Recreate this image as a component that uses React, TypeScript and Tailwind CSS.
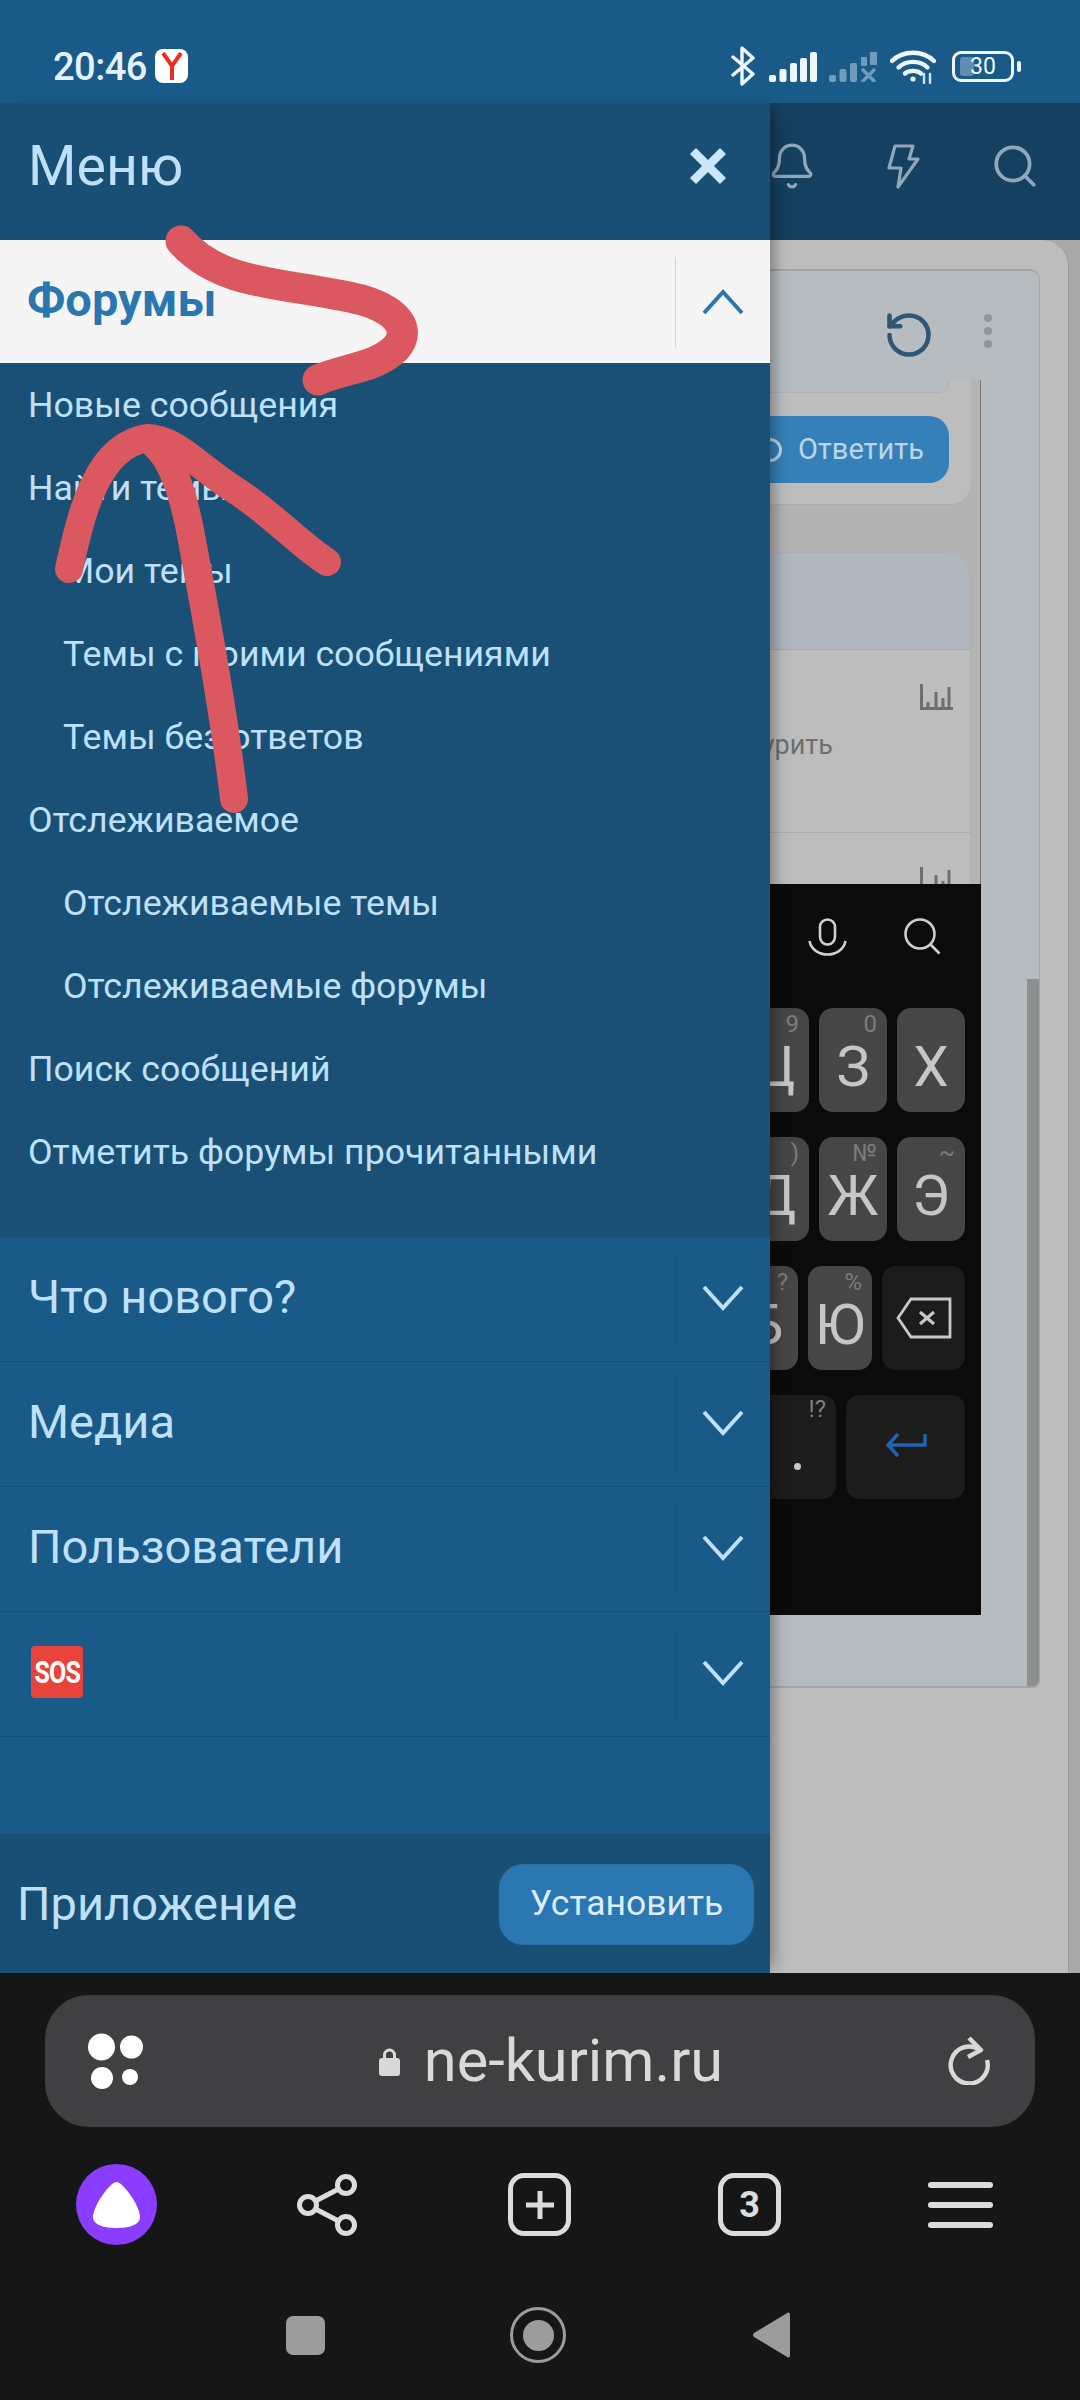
import { Bell, Search, RotateCcw } from "lucide-react";

const subItems = [
  { label: "Новые сообщения", nested: false },
  { label: "Найти темы", nested: false },
  { label: "Мои темы", nested: true },
  { label: "Темы с моими сообщениями", nested: true },
  { label: "Темы без ответов", nested: true },
  { label: "Отслеживаемое", nested: false },
  { label: "Отслеживаемые темы", nested: true },
  { label: "Отслеживаемые форумы", nested: true },
  { label: "Поиск сообщений", nested: false },
  { label: "Отметить форумы прочитанными", nested: false },
];

function Chevron({ up = false, color }: { up?: boolean; color: string }) {
  return (
    <svg width="42" height="26" viewBox="0 0 42 26" fill="none">
      <polyline
        points={up ? "2,24 21,3 40,24" : "2,2 21,23 40,2"}
        stroke={color}
        strokeWidth="4"
      />
    </svg>
  );
}

function StatusBar() {
  return (
    <div className="h-[103px] shrink-0 bg-[#195a88] flex items-start text-[#e4f2fc]">
      <span className="ml-[53px] mt-[47px] text-[38px] leading-[40px] font-medium tracking-[-0.5px] w-[95px]">20:46</span>
      <div className="ml-[7px] mt-[49px] w-[33px] h-[34px] rounded-[8px] bg-white flex items-center justify-center">
        <svg width="22" height="28" viewBox="0 0 22 28" fill="none" stroke="#ee2c22" strokeWidth="4">
          <path d="M2 1 L11 14 L20 1 M11 14 V28" />
        </svg>
      </div>
      <div className="ml-[543px] mt-[46px] flex items-start">
        <svg width="24" height="40" viewBox="0 0 24 40" fill="none" stroke="#eef7fd" strokeWidth="3.4" strokeLinecap="round" strokeLinejoin="round">
          <path d="M2 11 L22 28 L11 38 V2 L22 12 L2 29" />
        </svg>
        <svg className="ml-[14px] mt-[6px]" width="48" height="30" viewBox="0 0 48 30" fill="#eef7fd">
          <rect x="0" y="23" width="7" height="7" rx="2" />
          <rect x="10.5" y="17" width="7" height="13" rx="2" />
          <rect x="21" y="11" width="7" height="19" rx="2" />
          <rect x="31" y="6" width="7" height="24" rx="2" />
          <rect x="41" y="0" width="7" height="30" rx="2" />
        </svg>
        <svg className="ml-[12px] mt-[6px]" width="48" height="30" viewBox="0 0 48 30" fill="#6f9bbd">
          <rect x="0" y="23" width="7" height="7" rx="2" />
          <rect x="10.5" y="17" width="7" height="13" rx="2" />
          <rect x="21" y="11" width="7" height="19" rx="2" />
          <rect x="32" y="5" width="6" height="9" rx="1" />
          <rect x="41" y="0" width="7" height="13" rx="1" />
          <path d="M33 17 L46 30 M46 17 L33 30" stroke="#6f9bbd" strokeWidth="3.5" fill="none" />
        </svg>
        <svg className="ml-[13px] mt-[4px]" width="46" height="34" viewBox="0 0 46 34" fill="none" stroke="#eef7fd" strokeWidth="4.4" strokeLinecap="round">
          <path d="M2 11 C13 0 33 0 44 11" />
          <path d="M8.5 17.5 C16 10 30 10 37.5 17.5" />
          <path d="M15 23.5 C19 20 27 20 31 23.5" />
          <circle cx="23" cy="29" r="2.6" fill="#eef7fd" stroke="none" />
          <path d="M34 24 V33 M40 24 V33" strokeWidth="2.4" stroke="#cfe4f4" />
        </svg>
        <div className="ml-[16px] mt-[5px] relative w-[62px] h-[31px] rounded-[9px] border-[3px] border-[#eef7fd] flex items-center pl-[5px]">
          <div className="w-[14px] h-[19px] rounded-[3px] bg-[#5f8db3]" />
          <span className="absolute left-[15px] top-0 text-[23px] leading-[25px] text-[#eef7fd]">30</span>
        </div>
        <div className="ml-[3px] mt-[15px] w-[4px] h-[11px] rounded-[2px] bg-[#eef7fd]" />
      </div>
    </div>
  );
}

function AppHeader() {
  return (
    <div className="h-[137px] shrink-0 bg-[#15405f] flex items-center pl-[767px] pb-[11px] text-[#8fa8bc]">
      <Bell className="w-[50px] h-[50px]" strokeWidth={1.6} />
      <svg className="ml-[69px]" width="34" height="45" viewBox="0 0 34 45" fill="none" stroke="currentColor" strokeWidth="3.2" strokeLinejoin="round">
        <path d="M9 2 H27 L23 15 H32 L12 43 L15 24 H3 Z" />
      </svg>
      <Search className="ml-[70px] w-[50px] h-[50px]" strokeWidth={1.8} />
    </div>
  );
}

function BarsIcon() {
  return (
    <svg className="absolute right-[16px] top-[34px]" width="34" height="26" viewBox="0 0 34 26" fill="none" stroke="#6e6e6e">
      <path d="M1.5 0 V24.5 H33" strokeWidth="3" />
      <path d="M8 24 V18 M16 24 V8 M23 24 V14 M29 24 V3" strokeWidth="3" />
    </svg>
  );
}

function PageBehind() {
  return (
    <div className="flex-1 bg-[#a9a9a9] pr-[11px] overflow-hidden">
      <div className="h-full bg-[#bdbdbd] rounded-tr-[26px] border-r border-[#9c9c9c] pt-[29px] pr-[28px]">
        <div className="h-[1419px] bg-[#b7bcc0] rounded-tr-[10px] rounded-br-[8px] border-t-2 border-r border-b-2 border-[#a2a4a6] flex flex-col relative">
          <div className="h-[109px] shrink-0 flex items-start justify-end pr-[47px] pt-[38px]">
            <RotateCcw className="w-[52px] h-[52px] text-[#2f5673]" strokeWidth={2.1} />
            <div className="ml-[49px] mt-[5px] flex flex-col gap-[5px]">
              <div className="w-[8px] h-[8px] rounded-full bg-[#8a96a0]" />
              <div className="w-[8px] h-[8px] rounded-full bg-[#8a96a0]" />
              <div className="w-[8px] h-[8px] rounded-full bg-[#8a96a0]" />
            </div>
          </div>
          <div className="w-[981px] h-[505px] bg-[#b3b3b3] border-r border-[#777777] pr-[9px] flex flex-col">
            <div className="h-[125px] shrink-0 bg-[#bdbdbd] rounded-br-[20px] border-b border-[#adadad] pr-[22px] flex flex-col items-end">
              <div className="w-full h-[13px] rounded-br-[10px] border-b border-r border-[#a9b4ba] bg-[#b7bcc0]" />
              <div className="mt-[23px] w-[260px] h-[67px] rounded-r-[20px] bg-[#3580b8] flex items-center justify-end pr-[25px] text-[#b9d6ea] text-[29px]">
                <div className="w-[24px] h-[24px] rounded-full border-[3px] border-[#b9d6ea] mr-[16px]" />
                Ответить
              </div>
            </div>
            <div className="mt-[47px] flex-1 rounded-tr-[26px] bg-[#bdbdbd] border-r border-t border-[#adb0b2] flex flex-col">
              <div className="h-[97px] shrink-0 rounded-tr-[26px] bg-[#b0b6be] border-b border-[#a6aaaa]" />
              <div className="h-[183px] shrink-0 border-b border-[#adadad] relative">
                <BarsIcon />
                <div className="absolute right-[137px] top-[80px] text-[27px] leading-[30px] text-[#6f6f6f]">Бросить курить</div>
              </div>
              <div className="h-[40px] relative">
                <BarsIcon />
              </div>
            </div>
          </div>
          <div className="absolute right-0 bottom-0 w-[12px] h-[707px] bg-[#8e9090] rounded-br-[6px]" />
        </div>
      </div>
    </div>
  );
}

function Key({ letter, hint, w = "w-[68px]" }: { letter: string; hint?: string; w?: string }) {
  return (
    <div className={`${w} h-[104px] shrink-0 rounded-[14px] bg-[#464646] relative flex items-center justify-center pt-[14px] text-[56px] leading-none text-[#c6c6c6]`}>
      {hint && <span className="absolute right-[10px] top-[2px] text-[24px] leading-[28px] text-[#7c7c7c]">{hint}</span>}
      {letter}
    </div>
  );
}

function Keyboard() {
  return (
    <div className="absolute left-[700px] top-[884px] w-[281px] h-[731px] bg-[#0b0b0b] overflow-hidden flex flex-col items-end pr-[16px]">
      <div className="h-[124px] w-full flex justify-end items-start pt-[34px] pr-[24px] gap-[57px]">
        <svg width="39" height="39" viewBox="0 0 39 39" fill="none" stroke="#cfcfcf" strokeWidth="2.6">
          <rect x="12" y="1.5" width="15" height="25" rx="7.5" />
          <path d="M1.5 23 C5 41 34 41 37.5 23" />
        </svg>
        <svg width="37" height="37" viewBox="0 0 37 37" fill="none" stroke="#cfcfcf" strokeWidth="2.6">
          <circle cx="16" cy="16" r="14.5" />
          <path d="M26 26 L35.5 35.5" />
        </svg>
      </div>
      <div className="flex gap-[10px]">
        <Key letter="Ц" hint="9" />
        <Key letter="З" hint="0" />
        <Key letter="Х" />
      </div>
      <div className="flex gap-[10px] mt-[25px]">
        <Key letter="Д" hint=")" />
        <Key letter="Ж" hint="№" />
        <Key letter="Э" hint="~" />
      </div>
      <div className="flex gap-[10px] mt-[25px]">
        <Key letter="Б" hint="?" w="w-[64px]" />
        <Key letter="Ю" hint="%" w="w-[64px]" />
        <div className="w-[83px] h-[104px] rounded-[14px] bg-[#1c1c1c] flex items-center justify-center">
          <svg width="56" height="42" viewBox="0 0 56 42" fill="none" stroke="#c8c8c8" strokeWidth="2.8">
            <path d="M15 2 H54 V40 H15 L2 21 Z" />
            <path d="M24 15 L38 27 M38 15 L24 27" strokeWidth="3.2" />
          </svg>
        </div>
      </div>
      <div className="flex gap-[10px] mt-[25px]">
        <div className="w-[136px] h-[104px] rounded-[14px] bg-[#1c1c1c] relative">
          <span className="absolute right-[10px] top-[0px] text-[24px] leading-[28px] text-[#808080]">!?</span>
          <div className="absolute left-[94px] top-[68px] w-[7px] h-[7px] rounded-full bg-[#c6c6c6]" />
        </div>
        <div className="w-[119px] h-[104px] rounded-[14px] bg-[#1c1c1c] flex items-center justify-center pb-[4px]">
          <svg width="42" height="26" viewBox="0 0 42 26" fill="none" stroke="#1f63b4" strokeWidth="3.4">
            <path d="M40 2 V13 H3 M13 2 L3 13 L13 24" />
          </svg>
        </div>
      </div>
    </div>
  );
}

function DrawerRow({ label, children }: { label?: string; children?: React.ReactNode }) {
  return (
    <div className="h-[125px] shrink-0 flex items-center border-b border-[#174f79]">
      <div className="flex-1 pl-[28px] text-[47px] leading-[52px] text-[#bfe0f9] pb-[4px]">
        {label}
        {children}
      </div>
      <div className="w-[95px] h-[90px] border-l border-[#174f79] flex items-center justify-center pb-[2px]">
        <Chevron color="#bfe0f9" />
      </div>
    </div>
  );
}

function Drawer() {
  return (
    <div className="absolute left-0 top-[103px] w-[770px] h-[1870px] flex flex-col bg-[#195a88] shadow-[10px_0_14px_-6px_rgba(0,0,0,0.35)]">
      <div className="h-[137px] shrink-0 bg-[#1a4f75] flex items-center justify-between pl-[28px] pr-[43px] pb-[9px]">
        <span className="text-[55.5px] leading-[60px] text-[#bfe0f9]">Меню</span>
        <svg width="38" height="36" viewBox="0 0 38 36" fill="none" stroke="#c9e6fc" strokeWidth="8.5" className="mb-[2px]">
          <path d="M4 3 L34 33 M34 3 L4 33" />
        </svg>
      </div>
      <div className="h-[123px] shrink-0 bg-[#f5f5f5] flex items-center">
        <div className="flex-1 pl-[27px] pb-[3px] text-[47px] leading-[50px] font-bold text-[#2a77b0]">Форумы</div>
        <div className="w-[95px] h-[90px] border-l border-[#c3d7e5] flex items-center justify-center">
          <Chevron up color="#2a77b0" />
        </div>
      </div>
      <div className="h-[874px] shrink-0 bg-[#1a5075] pt-[1px]">
        {subItems.map((item) => (
          <div
            key={item.label}
            className={`h-[83px] flex items-center text-[35.7px] text-[#bfe0f9] ${item.nested ? "pl-[63px]" : "pl-[28px]"}`}
          >
            {item.label}
          </div>
        ))}
      </div>
      <DrawerRow label="Что нового?" />
      <DrawerRow label="Медиа" />
      <DrawerRow label="Пользователи" />
      <DrawerRow>
        <div className="w-[52px] h-[52px] ml-[3px] rounded-[4px] bg-[#e8443b] flex items-center justify-center">
          <span className="text-[32px] leading-none font-bold tracking-[-1px] text-white scale-x-[0.78]">SOS</span>
        </div>
      </DrawerRow>
      <div className="flex-1 border-b border-[#174f79]" />
      <div className="h-[138px] shrink-0 bg-[#1a4f75] flex items-center justify-between pl-[17px] pr-[16px]">
        <span className="text-[47px] leading-[52px] text-[#bfe0f9]">Приложение</span>
        <div className="w-[255px] h-[81px] rounded-[24px] bg-[#2a77b2] border border-[#2f6fa3] flex items-center justify-center text-[35.5px] text-[#dcecf8]">
          Установить
        </div>
      </div>
    </div>
  );
}

function BrowserBar() {
  return (
    <div className="h-[427px] shrink-0 bg-[#161616] pt-[22px] relative z-10">
      <div className="mx-[45px] h-[132px] rounded-[44px] bg-[#404043] flex items-center pl-[43px] pr-[45px]">
        <svg width="56" height="56" viewBox="0 0 56 56" fill="#ffffff">
          <circle cx="13.5" cy="14" r="13.5" />
          <circle cx="43.5" cy="14" r="11.5" />
          <circle cx="14" cy="45" r="11" />
          <circle cx="42" cy="44" r="8" />
        </svg>
        <div className="flex-1 flex items-center justify-center pl-[10px]">
          <svg width="21" height="29" viewBox="0 0 21 29" fill="#d9d9d9">
            <path d="M4 12 V8 a6.5 6.5 0 0 1 13 0 V12 h-3 V8 a3.5 3.5 0 0 0 -7 0 V12z" />
            <rect x="0" y="11" width="21" height="18" rx="3" />
          </svg>
          <span className="ml-[24px] text-[59.5px] leading-[60px] text-[#d9d9d9]">ne-kurim.ru</span>
        </div>
        <svg width="42" height="48" viewBox="0 0 42 48" fill="none" stroke="#d9d9d9" strokeWidth="4.4">
          <path d="M32 13 A18.5 18.5 0 1 0 39 23" />
          <path d="M21 1 L33 13 L20 20" strokeLinejoin="round" />
        </svg>
      </div>
      <div className="mt-[37px] h-[81px] flex items-center pl-[76px]">
        <div className="w-[81px] h-[81px] rounded-full bg-[#8a3cff] flex items-center justify-center">
          <svg width="47" height="46" viewBox="0 0 47 46" fill="#ffffff">
            <path d="M23.5 0 C30 0 47 24 47 35 C47 43 36 46 23.5 46 C11 46 0 43 0 35 C0 24 17 0 23.5 0 Z" />
          </svg>
        </div>
        <svg className="ml-[140px]" width="60" height="62" viewBox="0 0 60 62" fill="none" stroke="#dcdcdc" strokeWidth="5">
          <circle cx="49" cy="11" r="8.5" />
          <circle cx="11" cy="31" r="8.5" />
          <circle cx="49" cy="51" r="8.5" />
          <path d="M18.5 27 L41.5 15 M18.5 35 L41.5 47" />
        </svg>
        <div className="ml-[151px] w-[63px] h-[63px] rounded-[16px] border-[5px] border-[#dcdcdc] flex items-center justify-center">
          <svg width="28" height="28" viewBox="0 0 28 28" stroke="#dcdcdc" strokeWidth="5">
            <path d="M14 0 V28 M0 14 H28" />
          </svg>
        </div>
        <div className="ml-[147px] w-[63px] h-[63px] rounded-[16px] border-[5px] border-[#dcdcdc] flex items-center justify-center text-[36px] leading-none font-bold text-[#dcdcdc]">
          3
        </div>
        <div className="ml-[147px] w-[65px] flex flex-col gap-[14px]">
          <div className="h-[6px] rounded-full bg-[#dcdcdc]" />
          <div className="h-[6px] rounded-full bg-[#dcdcdc]" />
          <div className="h-[6px] rounded-full bg-[#dcdcdc]" />
        </div>
      </div>
      <div className="mt-[62px] h-[56px] flex items-center pl-[286px]">
        <div className="w-[39px] h-[39px] rounded-[7px] bg-[#9c9c9c]" />
        <div className="ml-[185px] w-[56px] h-[56px] rounded-full border-[3px] border-[#9c9c9c] flex items-center justify-center">
          <div className="w-[31px] h-[31px] rounded-full bg-[#9c9c9c]" />
        </div>
        <svg className="ml-[187px]" width="37" height="46" viewBox="0 0 37 46" fill="#9c9c9c">
          <path d="M35 0.5 Q37 0 37 3 V43 Q37 46 35 45.5 L1 25 Q-1 23 1 21 Z" />
        </svg>
      </div>
    </div>
  );
}

function Scribbles() {
  return (
    <svg className="absolute left-0 top-0 pointer-events-none" width="1080" height="900" viewBox="0 0 1080 900" fill="none" stroke="#dc5860" strokeLinecap="round" strokeLinejoin="round">
      <path d="M181 241 C 222 288, 290 282, 362 300 C 402 312, 410 332, 396 348 C 376 368, 345 368, 318 380" strokeWidth="31" />
      <path d="M69 569 C 80 520, 95 445, 148 438 C 175 438, 200 468, 235 490 C 270 512, 300 545, 327 562" strokeWidth="28" />
      <path d="M234 799 C 225 720, 207 620, 190 530 C 182 490, 172 460, 155 445" strokeWidth="28" />
    </svg>
  );
}

export default function App() {
  return (
    <div className="relative w-[1080px] h-[2400px] flex flex-col overflow-hidden font-['Roboto',sans-serif]">
      <StatusBar />
      <AppHeader />
      <PageBehind />
      <BrowserBar />
      <Keyboard />
      <Drawer />
      <Scribbles />
    </div>
  );
}
